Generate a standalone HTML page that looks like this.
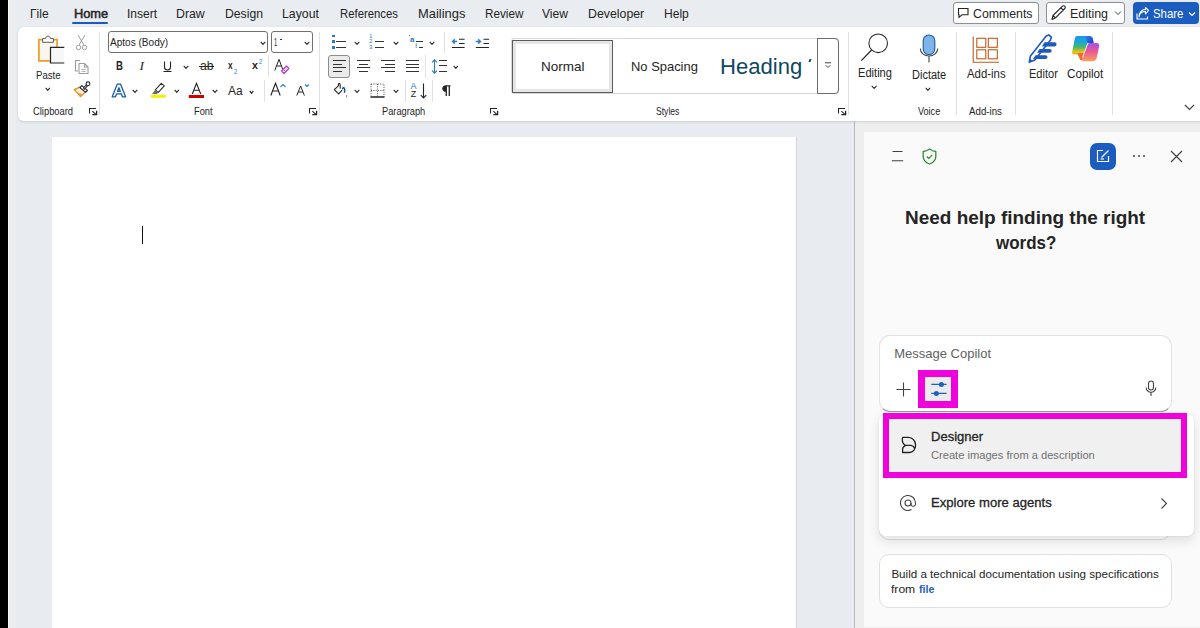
<!DOCTYPE html>
<html><head><meta charset="utf-8">
<style>
*{box-sizing:border-box;margin:0;padding:0}
html,body{width:1200px;height:628px;overflow:hidden}
body{position:relative;background:#e9ecf0;font-family:"Liberation Sans",sans-serif;color:#242424}
.a{position:absolute}
.t{position:absolute;white-space:nowrap;line-height:1}
#strip{left:0;top:0;width:8px;height:628px;background:#000}
#ribbon{left:17.5px;top:26.7px;width:1190px;height:94.3px;background:#fff;border-radius:6px;box-shadow:0 1px 3px rgba(0,0,0,.13)}
#canvas{left:8px;top:121px;width:846px;height:507px;background:#e8ebef}
#col{left:8px;top:0;width:8px;height:628px;background:linear-gradient(90deg,#f7f7f7 0,#f7f7f7 1px,#eceef0 1px)}
#page{left:52px;top:136.5px;width:743.5px;height:491px;background:#fff;box-shadow:1px 0 0 #cfd2d6}
#divider{left:854px;top:121px;width:1px;height:507px;background:#b9b9b9}
#side{left:855px;top:121px;width:345px;height:507px;background:#eeeeee}
#panel{left:864px;top:132px;width:336px;height:495px;background:#fafafa}
.sep{position:absolute;width:1px;background:#e1e1e1}
.tab{font-size:12.4px;color:#242424}
.btn{background:#fff;border:1px solid #8f8f8f;border-radius:3px}
.lbl{font-size:10.5px;color:#424242}
</style></head><body>
<div class="a" id="strip"></div>
<div class="a" id="canvas"></div>
<div class="a" id="col"></div>
<div class="a" id="page"></div>
<div class="a" id="divider"></div>
<div class="a" id="side"></div>
<div class="a" id="panel"></div>
<div class="a" id="ribbon"></div>
<span class="t" style="left:30.00px;top:7.59px;font-size:12.6px;color:#242424;transform:scaleX(0.9524);transform-origin:0 0;">&#915;ile</span>
<span class="t" style="left:127.00px;top:7.59px;font-size:12.6px;color:#242424;transform:scaleX(0.9524);transform-origin:0 0;">Insert</span>
<span class="t" style="left:176.25px;top:7.59px;font-size:12.6px;color:#242424;transform:scaleX(0.9772);transform-origin:0 0;">Draw</span>
<span class="t" style="left:224.50px;top:7.59px;font-size:12.6px;color:#242424;transform:scaleX(0.9682);transform-origin:0 0;">Design</span>
<span class="t" style="left:281.75px;top:7.59px;font-size:12.6px;color:#242424;transform:scaleX(0.9772);transform-origin:0 0;">Layout</span>
<span class="t" style="left:339.50px;top:7.59px;font-size:12.6px;color:#242424;transform:scaleX(0.8999);transform-origin:0 0;">References</span>
<span class="t" style="left:418.00px;top:7.59px;font-size:12.6px;color:#242424;transform:scaleX(1.0272);transform-origin:0 0;">Mailings</span>
<span class="t" style="left:484.50px;top:7.59px;font-size:12.6px;color:#242424;transform:scaleX(0.9316);transform-origin:0 0;">Review</span>
<span class="t" style="left:542.00px;top:7.59px;font-size:12.6px;color:#242424;transform:scaleX(0.9598);transform-origin:0 0;">View</span>
<span class="t" style="left:587.50px;top:7.59px;font-size:12.6px;color:#242424;transform:scaleX(0.9790);transform-origin:0 0;">Developer</span>
<span class="t" style="left:663.60px;top:7.59px;font-size:12.6px;color:#242424;transform:scaleX(0.9578);transform-origin:0 0;">Help</span>
<span class="t" style="left:73.50px;top:7.59px;font-size:12.6px;color:#242424;transform:scaleX(1.0166);transform-origin:0 0;-webkit-text-stroke:0.5px #242424;">Home</span>
<div class="a" style="left:72px;top:22px;width:36px;height:2px;background:#185abd;border-radius:1px"></div>
<div class="a btn" style="left:953px;top:2px;width:86px;height:21.6px"></div>
<div class="a btn" style="left:1046.3px;top:2px;width:78.5px;height:21.6px"></div>
<div class="a" style="left:1133px;top:2px;width:66px;height:22px;background:#1a5cc0;border-radius:4px"></div>
<span class="t" style="left:972.50px;top:7.69px;font-size:12.6px;color:#242424;transform:scaleX(0.9767);transform-origin:0 0;">Comments</span>
<span class="t" style="left:1070.00px;top:7.69px;font-size:12.6px;color:#242424;transform:scaleX(0.9856);transform-origin:0 0;">Editing</span>
<span class="t" style="left:1152.50px;top:8.02px;font-size:12.8px;color:#fff;transform:scaleX(0.8924);transform-origin:0 0;">Share</span>

<svg class="a" style="left:956px;top:6px" width="14" height="14" viewBox="0 0 14 14"><path d="M2.5 2.5h9.5v6.3H6L3 11.3V8.8h-0.5z" fill="none" stroke="#242424" stroke-width="1.1" stroke-linejoin="miter"/></svg>
<svg class="a" style="left:1050px;top:5px" width="17" height="16" viewBox="0 0 17 16"><path d="M2 14.5l1-4L12.5 1.2a1.6 1.6 0 0 1 2.3 2.3L5.5 12.8z M11 2.8l2.3 2.3 M3 10.5l2.5 2.3" fill="none" stroke="#242424" stroke-width="1.1" stroke-linejoin="round"/></svg>
<svg class="a" style="left:1114px;top:10px" width="8" height="6" viewBox="0 0 8 6"><path d="M1 1.5l3 3 3-3" fill="none" stroke="#424242" stroke-width="1"/></svg>
<svg class="a" style="left:1136px;top:7px" width="13" height="13" viewBox="0 0 13 13"><path d="M1 6.5v5.5h10.5V9.5" fill="none" stroke="#fff" stroke-width="1.1"/><path d="M3 10c0.5-3.5 3-5.5 6.5-5.5V7L12.5 3.5 9.5 0.5V2.5C5.5 2.5 3 5.5 3 10z" fill="none" stroke="#fff" stroke-width="1.1" stroke-linejoin="round"/></svg>
<svg class="a" style="left:1188px;top:11px" width="8" height="6" viewBox="0 0 8 6"><path d="M1 1.5l3 3 3-3" fill="none" stroke="#fff" stroke-width="1.1"/></svg>

<div class="a" style="left:99px;top:32px;width:1px;height:83px;background:#e0e0e0"></div>
<div class="a" style="left:319px;top:32px;width:1px;height:83px;background:#e0e0e0"></div>
<div class="a" style="left:848px;top:32px;width:1px;height:83px;background:#e0e0e0"></div>
<div class="a" style="left:956px;top:32px;width:1px;height:83px;background:#e0e0e0"></div>
<div class="a" style="left:1015px;top:32px;width:1px;height:83px;background:#e0e0e0"></div>
<div class="a" style="left:1112px;top:32px;width:1px;height:83px;background:#e0e0e0"></div>
<div class="a" style="left:268px;top:55px;width:1px;height:22px;background:#e0e0e0"></div>
<div class="a" style="left:264px;top:80px;width:1px;height:22px;background:#e0e0e0"></div>
<div class="a" style="left:444px;top:32px;width:1px;height:21px;background:#e0e0e0"></div>
<div class="a" style="left:425px;top:55px;width:1px;height:23px;background:#e0e0e0"></div>
<div class="a" style="left:405px;top:80px;width:1px;height:22px;background:#e0e0e0"></div>
<div class="a" style="left:432px;top:80px;width:1px;height:22px;background:#e0e0e0"></div>
<span class="t" style="left:32.90px;top:105.89px;font-size:10.6px;color:#242424;transform:scaleX(0.8839);transform-origin:0 0;">Clipboard</span>
<span class="t" style="left:193.50px;top:105.89px;font-size:10.6px;color:#242424;transform:scaleX(0.8726);transform-origin:0 0;">Font</span>
<span class="t" style="left:381.70px;top:105.89px;font-size:10.6px;color:#242424;transform:scaleX(0.8747);transform-origin:0 0;">Paragraph</span>
<span class="t" style="left:656.00px;top:105.89px;font-size:10.6px;color:#242424;transform:scaleX(0.8101);transform-origin:0 0;">Styles</span>
<span class="t" style="left:917.50px;top:105.89px;font-size:10.6px;color:#242424;transform:scaleX(0.8566);transform-origin:0 0;">Voice</span>
<span class="t" style="left:969.00px;top:105.89px;font-size:10.6px;color:#242424;transform:scaleX(0.9184);transform-origin:0 0;">Add-ins</span>
<svg class="a" style="left:89px;top:108px" width="9" height="8" viewBox="0 0 9 8"><path d="M0.5 5.5V0.5H7" fill="none" stroke="#242424" stroke-width="1.1"/><path d="M3.3 3.2L7 6.3" stroke="#242424" stroke-width="1.1"/><path d="M3.3 6.6H7.6V2.8" fill="none" stroke="#242424" stroke-width="1.3"/></svg>
<svg class="a" style="left:309px;top:108px" width="9" height="8" viewBox="0 0 9 8"><path d="M0.5 5.5V0.5H7" fill="none" stroke="#242424" stroke-width="1.1"/><path d="M3.3 3.2L7 6.3" stroke="#242424" stroke-width="1.1"/><path d="M3.3 6.6H7.6V2.8" fill="none" stroke="#242424" stroke-width="1.3"/></svg>
<svg class="a" style="left:490px;top:108px" width="9" height="8" viewBox="0 0 9 8"><path d="M0.5 5.5V0.5H7" fill="none" stroke="#242424" stroke-width="1.1"/><path d="M3.3 3.2L7 6.3" stroke="#242424" stroke-width="1.1"/><path d="M3.3 6.6H7.6V2.8" fill="none" stroke="#242424" stroke-width="1.3"/></svg>
<svg class="a" style="left:838px;top:108px" width="9" height="8" viewBox="0 0 9 8"><path d="M0.5 5.5V0.5H7" fill="none" stroke="#242424" stroke-width="1.1"/><path d="M3.3 3.2L7 6.3" stroke="#242424" stroke-width="1.1"/><path d="M3.3 6.6H7.6V2.8" fill="none" stroke="#242424" stroke-width="1.3"/></svg>
<svg class="a" style="left:1184px;top:104px" width="11" height="7" viewBox="0 0 11 7"><path d="M1 1l4.5 4.5L10 1" fill="none" stroke="#424242" stroke-width="1.1"/></svg>
<svg class="a" style="left:36px;top:34px" width="30" height="31" viewBox="0 0 30 31"><rect x="2.9" y="5.6" width="18.2" height="21.3" fill="#fbf6ee" stroke="#eba43a" stroke-width="1.9"/><path d="M6.6 8.3V4.6H9.6C9.8 2.7 10.8 2.2 12 2.2S14.2 2.7 14.4 4.6H17.4V8.3z" fill="#fff" stroke="#5a5a5a" stroke-width="1"/><path d="M28.3 13.4H14.5V29H28.3" fill="#f7f7f7" stroke="#242424" stroke-width="1.2"/></svg>
<span class="t" style="left:35.80px;top:69.82px;font-size:10.8px;color:#242424;transform:scaleX(0.8879);transform-origin:0 0;">Paste</span>
<svg class="a" style="left:45.00px;top:87.00px" width="5.5" height="4.5" viewBox="0 0 5.5 4.5"><path d="M0.7 0.9L2.75 3.4L4.80 0.9" fill="none" stroke="#242424" stroke-width="1.05"/></svg>
<svg class="a" style="left:75px;top:34px" width="13" height="17" viewBox="0 0 13 17"><path d="M3 1L9 11 M10 1L4 11" stroke="#9e9e9e" stroke-width="1" fill="none"/><circle cx="3.5" cy="13.5" r="2.2" fill="none" stroke="#9e9e9e"/><circle cx="9.5" cy="13.5" r="2.2" fill="none" stroke="#9e9e9e"/></svg>
<svg class="a" style="left:73px;top:58px" width="17" height="17" viewBox="0 0 17 17"><path d="M7 2.5H2.5V13H5" fill="none" stroke="#9e9e9e" stroke-width="1.1"/><path d="M6 5.5H11.5L15 9V15.5H6z M11.5 5.5V9H15" fill="#fff" stroke="#9e9e9e" stroke-width="1.1" stroke-linejoin="round"/><path d="M8.5 11.5h4M8.5 13.5h4" stroke="#9e9e9e" stroke-width="0.8"/></svg>
<svg class="a" style="left:70px;top:78px" width="24" height="22" viewBox="0 0 24 22"><path d="M4.3 11.6L9.8 9.1 15.4 14 10.5 18.6z" fill="#fdf0dc" stroke="#e08a1e" stroke-width="1.3" stroke-linejoin="round"/><path d="M6.5 14.2L10.5 18.6 13 16.3z" fill="#e8a040"/><path d="M10 9.6L11.8 7.6 17.5 12.4 15.6 14.4z" fill="#fff" stroke="#2a2a2a" stroke-width="1.2" stroke-linejoin="round"/><path d="M14.2 10.3L17 7.2" stroke="#2a2a2a" stroke-width="2.6" stroke-linecap="round"/><path d="M14.2 10.3L17 7.2" stroke="#fff" stroke-width="0.7" stroke-linecap="round"/><circle cx="18" cy="5.8" r="1.9" fill="#fff" stroke="#2a2a2a" stroke-width="1.1"/></svg>
<div class="a" style="left:108px;top:31px;width:160px;height:22px;border:1px solid #707070;border-radius:3px;background:#fff"></div>
<div class="a" style="left:271px;top:31px;width:41.5px;height:21.8px;border:1px solid #707070;border-radius:3px;background:#fff"></div>
<span class="t" style="left:110.10px;top:37.18px;font-size:11.2px;color:#242424;transform:scaleX(0.8990);transform-origin:0 0;">Aptos (Body)</span>
<span class="t" style="left:274.00px;top:37.08px;font-size:11.2px;color:#242424;transform:scaleX(0.5148);transform-origin:0 0;">1</span>
<div class="a" style="left:280px;top:38.8px;width:1.8px;height:1px;background:#333"></div>
<svg class="a" style="left:259.50px;top:40.50px" width="6.0" height="4.5" viewBox="0 0 6.0 4.5"><path d="M0.7 0.9L3.00 3.4L5.30 0.9" fill="none" stroke="#242424" stroke-width="1.05"/></svg>
<svg class="a" style="left:303.50px;top:40.50px" width="6.0" height="4.5" viewBox="0 0 6.0 4.5"><path d="M0.7 0.9L3.00 3.4L5.30 0.9" fill="none" stroke="#242424" stroke-width="1.05"/></svg>
<span class="t" style="left:115.50px;top:60.29px;font-size:12.6px;font-weight:bold;color:#242424;transform:scaleX(0.7606);transform-origin:0 0;">B</span>
<span class="t" style="left:139.5px;top:58.5px;font:italic 13.5px/1 'Liberation Serif';color:#242424;">I</span>
<svg class="a" style="left:163px;top:61px" width="9" height="12" viewBox="0 0 9 12"><path d="M1.5 0.5V6a3 3 0 0 0 6 0V0.5" fill="none" stroke="#242424" stroke-width="1.1"/><path d="M0.5 10.5H8.5" stroke="#242424" stroke-width="1"/></svg>
<svg class="a" style="left:182.50px;top:64.50px" width="6.0" height="4.5" viewBox="0 0 6.0 4.5"><path d="M0.7 0.9L3.00 3.4L5.30 0.9" fill="none" stroke="#242424" stroke-width="1.05"/></svg>
<span class="t" style="left:199.50px;top:60.30px;font-size:12px;color:#242424;transform:scaleX(1.0135);transform-origin:0 0;">ab</span>
<div class="a" style="left:198.5px;top:66px;width:15.5px;height:1px;background:#242424"></div>
<span class="t" style="left:227.80px;top:60.23px;font-size:11.5px;font-weight:bold;color:#242424;transform:scaleX(0.7207);transform-origin:0 0;">x</span>
<span class="t" style="left:233.80px;top:68.05px;font-size:7px;color:#2a7ac4;transform:scaleX(0.8237);transform-origin:0 0;">2</span>
<span class="t" style="left:251.70px;top:60.23px;font-size:11.5px;font-weight:bold;color:#242424;transform:scaleX(0.9244);transform-origin:0 0;">x</span>
<span class="t" style="left:258.50px;top:58.05px;font-size:7px;color:#2a7ac4;transform:scaleX(0.8237);transform-origin:0 0;">2</span>
<svg class="a" style="left:274px;top:58px" width="17" height="17" viewBox="0 0 17 17"><path d="M0.8 12.5L5 1.3L9.2 12.5 M2.5 8h5" fill="none" stroke="#242424" stroke-width="1"/><path d="M7.5 13l5-5 2.5 2.5-5 5z" fill="#f2d8f5" stroke="#b146c2" stroke-width="1.2" stroke-linejoin="round"/><path d="M9.2 11.3l2.5 2.5" stroke="#b146c2"/></svg>
<svg class="a" style="left:110.8px;top:82.6px" width="16" height="15" viewBox="0 0 16 15"><path d="M1.2 13.8L6.3 1h3.2L14.6 13.8h-3.2l-1.1-3H5.6l-1.1 3z M6.5 8.4h2.8L7.9 4.6z" fill="#effaff" stroke="#1d5a9c" stroke-width="1.25" stroke-linejoin="round"/></svg>
<svg class="a" style="left:132.00px;top:89.00px" width="6.0" height="4.5" viewBox="0 0 6.0 4.5"><path d="M0.7 0.9L3.00 3.4L5.30 0.9" fill="none" stroke="#242424" stroke-width="1.05"/></svg>
<svg class="a" style="left:148px;top:80px" width="20" height="20" viewBox="0 0 20 20"><path d="M7.3 9.8L13.3 3.3 16.3 5.9 10.3 12.4z" fill="#fff" stroke="#2e2e2e" stroke-width="1.1" stroke-linejoin="round"/><path d="M7.3 9.8L10.3 12.4 8.9 13.9H4z" fill="#6b6b6b"/><rect x="3" y="14.8" width="14.8" height="3" fill="#f3f000"/></svg>
<svg class="a" style="left:173.50px;top:89.00px" width="5.5" height="4.5" viewBox="0 0 5.5 4.5"><path d="M0.7 0.9L2.75 3.4L4.80 0.9" fill="none" stroke="#242424" stroke-width="1.05"/></svg>
<svg class="a" style="left:188px;top:82px" width="17" height="17" viewBox="0 0 17 17"><path d="M4.3 12L8.5 1.3L12.7 12 M5.8 8.2h5.4" fill="none" stroke="#242424" stroke-width="1.1"/><rect x="0.8" y="13" width="15.2" height="3" fill="#d10000"/></svg>
<svg class="a" style="left:211.50px;top:89.00px" width="6.0" height="4.5" viewBox="0 0 6.0 4.5"><path d="M0.7 0.9L3.00 3.4L5.30 0.9" fill="none" stroke="#242424" stroke-width="1.05"/></svg>
<span class="t" style="left:228.30px;top:84.88px;font-size:12.5px;color:#242424;transform:scaleX(0.9600);transform-origin:0 0;">Aa</span>
<svg class="a" style="left:248.50px;top:89.50px" width="5.0" height="4.5" viewBox="0 0 5.0 4.5"><path d="M0.7 0.9L2.50 3.4L4.30 0.9" fill="none" stroke="#242424" stroke-width="1.05"/></svg>
<svg class="a" style="left:270px;top:82px" width="17" height="15" viewBox="0 0 17 15"><path d="M0.8 13.5L5.5 1.2L10.2 13.5 M2.7 9h5.6" fill="none" stroke="#242424" stroke-width="1.1"/><path d="M10.5 5l2.5-2.5 2.5 2.5" fill="none" stroke="#2a7ac4" stroke-width="1.1"/></svg>
<svg class="a" style="left:296px;top:83px" width="14" height="14" viewBox="0 0 14 14"><path d="M0.8 12.5L4.6 3L8.4 12.5 M2.3 9h4.6" fill="none" stroke="#242424" stroke-width="1"/><path d="M9 1.5l2 2 2-2" fill="none" stroke="#2a7ac4" stroke-width="1.1"/></svg>
<div class="a" style="left:332px;top:35px;width:2.6px;height:2.3px;background:#2b78c5"></div>
<div class="a" style="left:332px;top:40.3px;width:2.6px;height:2.3px;background:#2b78c5"></div>
<div class="a" style="left:332px;top:46.3px;width:2.6px;height:2.3px;background:#2b78c5"></div>
<div class="a" style="left:336px;top:41px;width:10px;height:1px;background:#333"></div>
<div class="a" style="left:336px;top:47px;width:10px;height:1px;background:#333"></div>
<svg class="a" style="left:354.00px;top:40.50px" width="6.0" height="4.5" viewBox="0 0 6.0 4.5"><path d="M0.7 0.9L3.00 3.4L5.30 0.9" fill="none" stroke="#242424" stroke-width="1.05"/></svg>
<span class="t" style="left:369.3px;top:33.5px;font-size:5.6px;color:#2b78c5;line-height:1">1</span>
<span class="t" style="left:369.3px;top:39px;font-size:5.6px;color:#2b78c5;line-height:1">2</span>
<span class="t" style="left:369.3px;top:45px;font-size:5.6px;color:#2b78c5;line-height:1">3</span>
<div class="a" style="left:375px;top:41px;width:9px;height:1px;background:#333"></div>
<div class="a" style="left:375px;top:47px;width:9px;height:1px;background:#333"></div>
<svg class="a" style="left:392.50px;top:40.50px" width="6.0" height="4.5" viewBox="0 0 6.0 4.5"><path d="M0.7 0.9L3.00 3.4L5.30 0.9" fill="none" stroke="#242424" stroke-width="1.05"/></svg>
<div class="a" style="left:409px;top:34.5px;width:1.2px;height:1.2px;background:#2b78c5"></div>
<span class="t" style="left:410.1px;top:35.6px;font-size:8px;font-weight:bold;color:#2b78c5;line-height:1">a</span>
<span class="t" style="left:415.3px;top:42.2px;font-size:8px;color:#2b78c5;line-height:1">i</span>
<div class="a" style="left:416px;top:41px;width:7px;height:1px;background:#333"></div>
<div class="a" style="left:419px;top:47px;width:4px;height:1px;background:#333"></div>
<svg class="a" style="left:429.00px;top:40.50px" width="6.0" height="4.5" viewBox="0 0 6.0 4.5"><path d="M0.7 0.9L3.00 3.4L5.30 0.9" fill="none" stroke="#242424" stroke-width="1.05"/></svg>
<svg class="a" style="left:451px;top:38px" width="15" height="11" viewBox="0 0 15 11"><path d="M6.2 3.5H1.6M3.8 1.3L1.5 3.5 3.8 5.7" fill="none" stroke="#2a7ab8" stroke-width="1.3"/><path d="M8 1.3h5.6M8 5.5h5.6M0.8 9.5h12.8" stroke="#242424" stroke-width="1.1"/></svg>
<svg class="a" style="left:475px;top:38px" width="15" height="11" viewBox="0 0 15 11"><path d="M0.8 3.5H5.4M3.2 1.3L5.5 3.5 3.2 5.7" fill="none" stroke="#2a7ab8" stroke-width="1.3"/><path d="M8.5 1.3h5.6M8.5 5.5h5.6M0.8 9.5h13.3" stroke="#242424" stroke-width="1.1"/></svg>
<div class="a" style="left:328px;top:55px;width:22px;height:22.5px;background:#ebebeb;border:1px solid #8c8c8c;border-radius:3px"></div>
<div class="a" style="left:333px;top:60px;width:13px;height:1px;background:#333"></div>
<div class="a" style="left:357px;top:60px;width:13px;height:1px;background:#333"></div>
<div class="a" style="left:381px;top:60px;width:14px;height:1px;background:#333"></div>
<div class="a" style="left:406px;top:60px;width:13px;height:1px;background:#333"></div>
<div class="a" style="left:333px;top:64px;width:9px;height:1px;background:#333"></div>
<div class="a" style="left:359px;top:64px;width:9px;height:1px;background:#333"></div>
<div class="a" style="left:385px;top:64px;width:10px;height:1px;background:#333"></div>
<div class="a" style="left:406px;top:64px;width:13px;height:1px;background:#333"></div>
<div class="a" style="left:333px;top:67px;width:13px;height:1px;background:#333"></div>
<div class="a" style="left:357px;top:67px;width:13px;height:1px;background:#333"></div>
<div class="a" style="left:381px;top:67px;width:14px;height:1px;background:#333"></div>
<div class="a" style="left:406px;top:67px;width:13px;height:1px;background:#333"></div>
<div class="a" style="left:333px;top:71px;width:9px;height:1px;background:#333"></div>
<div class="a" style="left:359px;top:71px;width:9px;height:1px;background:#333"></div>
<div class="a" style="left:385px;top:71px;width:10px;height:1px;background:#333"></div>
<div class="a" style="left:406px;top:71px;width:13px;height:1px;background:#333"></div>
<svg class="a" style="left:431px;top:59px" width="7" height="15" viewBox="0 0 7 15"><path d="M3.5 1v13M1 3.3L3.5 0.8 6 3.3M1 11.7L3.5 14.2 6 11.7" fill="none" stroke="#2b78c5" stroke-width="1.1"/></svg>
<div class="a" style="left:439px;top:60px;width:8px;height:1px;background:#333"></div>
<div class="a" style="left:439px;top:65px;width:8px;height:1px;background:#333"></div>
<div class="a" style="left:439px;top:71px;width:8px;height:1px;background:#333"></div>
<svg class="a" style="left:452.80px;top:64.50px" width="5.7" height="4.5" viewBox="0 0 5.7 4.5"><path d="M0.7 0.9L2.85 3.4L5.00 0.9" fill="none" stroke="#242424" stroke-width="1.05"/></svg>
<svg class="a" style="left:330px;top:80px" width="20" height="20" viewBox="0 0 20 20"><path d="M10.3 8.6L10.1 4.3C9.9 3.2 8.4 3.3 8.4 4.3V5.8L4.3 9.6 8.6 13.8 12.1 10.1" fill="none" stroke="#242424" stroke-width="1.1" stroke-linejoin="round"/><path d="M12.4 9.3C12.5 7.3 14.5 7.3 14.6 9.2V12.8" fill="none" stroke="#0e5c86" stroke-width="1.5"/><path d="M16.6 15V17.6" stroke="#888" stroke-width="0.9"/></svg>
<svg class="a" style="left:354.00px;top:89.00px" width="6.0" height="4.5" viewBox="0 0 6.0 4.5"><path d="M0.7 0.9L3.00 3.4L5.30 0.9" fill="none" stroke="#242424" stroke-width="1.05"/></svg>
<svg class="a" style="left:369.5px;top:82.5px" width="15" height="15" viewBox="0 0 15 15"><path d="M1 1H14V14M1 1V14M7.5 1V14M1 7.5H14" fill="none" stroke="#555" stroke-width="1" stroke-dasharray="1 1.3"/><path d="M0.5 14H14.5" stroke="#242424" stroke-width="1.5"/></svg>
<svg class="a" style="left:392.50px;top:89.00px" width="6.0" height="4.5" viewBox="0 0 6.0 4.5"><path d="M0.7 0.9L3.00 3.4L5.30 0.9" fill="none" stroke="#242424" stroke-width="1.05"/></svg>
<span class="t" style="left:410.6px;top:81.8px;font-size:9px;color:#2b78c5;line-height:1">A</span>
<span class="t" style="left:410.8px;top:90.2px;font-size:9px;color:#242424;line-height:1">Z</span>
<svg class="a" style="left:419.5px;top:82.5px" width="7" height="16" viewBox="0 0 7 16"><path d="M3.5 0.5V15M0.8 12.2L3.5 15 6.2 12.2" fill="none" stroke="#242424" stroke-width="1.1"/></svg>
<svg class="a" style="left:441px;top:85px" width="10" height="11" viewBox="0 0 10 11"><path d="M4.5 0.8A2.8 2.8 0 0 0 4.5 6.4z" fill="#242424" stroke="#242424"/><path d="M4.5 0.8H9.5M5.3 0.8V11M8.3 0.8V11" fill="none" stroke="#242424" stroke-width="1.3"/></svg>
<div class="a" style="left:510.5px;top:38.4px;width:328px;height:56px;border:1px solid #d6d6d6;border-radius:3px;background:#fff"></div>
<div class="a" style="left:512px;top:40px;width:101px;height:52.5px;border:1.5px solid #5c5c5c;background:#fff;box-shadow:inset 0 0 0 3px #e6e6e6"></div>
<div class="a" style="left:817.3px;top:38.4px;width:21.5px;height:56px;border:1px solid #6b6b6b;border-radius:0 4px 4px 0;background:#fff"></div>
<svg class="a" style="left:824px;top:62px" width="8" height="7" viewBox="0 0 8 7"><path d="M1 0.8h6M1.8 3.3L4 5.5 6.2 3.3" fill="none" stroke="#424242" stroke-width="1"/></svg>
<span class="t" style="left:540.50px;top:61.12px;font-size:12.8px;color:#242424;transform:scaleX(1.0538);transform-origin:0 0;">Normal</span>
<span class="t" style="left:630.50px;top:61.12px;font-size:12.8px;color:#242424;transform:scaleX(1.0109);transform-origin:0 0;">No Spacing</span>
<span class="t" style="left:719.80px;top:55.58px;font-size:22.5px;color:#0f4761;transform:scaleX(0.9808);transform-origin:0 0;">Heading</span>
<div class="a" style="left:809px;top:59px;width:1.5px;height:3px;background:#0f4761;transform:skewX(-20deg)"></div>
<svg class="a" style="left:860px;top:33px" width="30" height="29" viewBox="0 0 30 29"><circle cx="18.2" cy="10.3" r="9.3" fill="#fff" stroke="#242424" stroke-width="1.05"/><path d="M11.6 17L1.3 27.7" stroke="#242424" stroke-width="1.2"/></svg>
<span class="t" style="left:857.60px;top:66.70px;font-size:12px;color:#242424;transform:scaleX(0.9259);transform-origin:0 0;">Editing</span>
<svg class="a" style="left:871.20px;top:84.50px" width="6.3" height="4.5" viewBox="0 0 6.3 4.5"><path d="M0.7 0.9L3.15 3.4L5.60 0.9" fill="none" stroke="#242424" stroke-width="1.05"/></svg>
<svg class="a" style="left:918px;top:34px" width="22" height="29" viewBox="0 0 22 29"><rect x="5.2" y="1" width="11.6" height="19.5" rx="5.8" fill="#7fb4ea" stroke="#1f5a9e" stroke-width="1.1"/><path d="M2.3 14.5a8.7 7.5 0 0 0 17.4 0M11 22v6.5" fill="none" stroke="#424242" stroke-width="1.1"/></svg>
<span class="t" style="left:911.80px;top:68.80px;font-size:12px;color:#242424;transform:scaleX(0.9164);transform-origin:0 0;">Dictate</span>
<svg class="a" style="left:925.30px;top:86.50px" width="5.8" height="4.5" viewBox="0 0 5.8 4.5"><path d="M0.7 0.9L2.90 3.4L5.10 0.9" fill="none" stroke="#242424" stroke-width="1.05"/></svg>
<svg class="a" style="left:972px;top:36px" width="28" height="27" viewBox="0 0 28 27"><path d="M1.2 0.5V26.2H27" fill="none" stroke="#c05a1a" stroke-width="1.1"/><rect x="4.8" y="2.3" width="9" height="9" fill="none" stroke="#c05a1a" stroke-width="1.1"/><rect x="16.3" y="2.3" width="9" height="9" fill="none" stroke="#c05a1a" stroke-width="1.1"/><rect x="4.8" y="13.8" width="9" height="9" fill="none" stroke="#c05a1a" stroke-width="1.1"/><rect x="16.3" y="13.8" width="9" height="9" fill="none" stroke="#c05a1a" stroke-width="1.1"/></svg>
<span class="t" style="left:967.00px;top:67.60px;font-size:12px;color:#242424;transform:scaleX(0.9489);transform-origin:0 0;">Add-ins</span>
<svg class="a" style="left:1027px;top:34px" width="31" height="30" viewBox="0 0 31 30"><path d="M2.2 28.3L3.3 22.3 19 2.3 21.8 0.9 24.3 3.2 23.5 6 7.8 26z" fill="#fff" stroke="#1e5bbf" stroke-width="1.6" stroke-linejoin="round"/><path d="M2.2 28.3L2.9 24.6 5.5 26.7z" fill="#1e5bbf"/><path d="M17.4 8.2H27.5a2.1 2.1 0 0 1 0 4.2H15z M12.5 14.9H22.8a1.9 1.9 0 0 1 0 3.8H10z M8.6 21.2H18.6a1.9 1.9 0 0 1 0 3.8H6z" fill="#1e5bbf"/></svg>
<span class="t" style="left:1028.80px;top:67.60px;font-size:12px;color:#242424;transform:scaleX(0.9195);transform-origin:0 0;">Editor</span>
<svg class="a" style="left:1068px;top:32px" width="34" height="32" viewBox="0 0 34 32"><defs><linearGradient id="cg1" x1="0" y1="0" x2="0" y2="1"><stop offset="0" stop-color="#1a9ae6"/><stop offset=".3" stop-color="#1fa2e0"/><stop offset=".6" stop-color="#43b86a"/><stop offset=".85" stop-color="#e7c418"/><stop offset="1" stop-color="#f2b418"/></linearGradient><linearGradient id="cg2" x1="0" y1="0" x2="0" y2="1"><stop offset="0" stop-color="#a94ef0"/><stop offset=".5" stop-color="#ee5a8c"/><stop offset="1" stop-color="#f8a05e"/></linearGradient><linearGradient id="cg3" x1="0" y1="0" x2="1" y2="1"><stop offset="0" stop-color="#2f7ef0"/><stop offset="1" stop-color="#1a3fc6"/></linearGradient></defs><path d="M9 4H21C23 4 24.4 5 24.9 7L25.6 11H20.8L16.2 22.5H6C4.6 22.5 3.8 21.5 4.1 20L6.6 7.5C7.1 5.3 7.8 4 9 4z" fill="url(#cg1)"/><path d="M17.5 4H21C23 4 24.4 5 24.9 7L25.6 11.5H19.8z" fill="url(#cg3)"/><path d="M9.5 21H17.5L14.8 27.8C14.3 28.8 12.8 28.8 12.2 27.8L10 23z" fill="#f26a2e"/><path d="M20.8 11.2L15.3 26" stroke="#fff" stroke-width="2.6"/><path d="M22 11H28.6C30.6 11 31.6 12.5 31.1 14.5L28.6 26.2C28.1 28.2 26.6 29.2 24.6 29.2H15.8C14.6 29.2 14 28.2 14.4 27.2L19.4 13.5C20 11.8 20.8 11 22 11z" fill="url(#cg2)"/></svg>
<span class="t" style="left:1066.70px;top:67.60px;font-size:12px;color:#242424;transform:scaleX(0.9711);transform-origin:0 0;">Copilot</span>
<div class="a" style="left:142px;top:226px;width:1px;height:18px;background:#111"></div>
<svg class="a" style="left:891px;top:150px" width="13" height="12" viewBox="0 0 13 12"><path d="M1.5 1.5H11.5M0.8 10.8H12.2" stroke="#424242" stroke-width="1.1"/></svg>
<svg class="a" style="left:922px;top:148px" width="15" height="17" viewBox="0 0 15 17"><path d="M7.5 1C5.5 2.5 3.5 3.3 1.2 3.5V8.5C1.2 12 3.5 14.5 7.5 16 11.5 14.5 13.8 12 13.8 8.5V3.5C11.5 3.3 9.5 2.5 7.5 1z" fill="none" stroke="#2e8a36" stroke-width="1.3" stroke-linejoin="round"/><path d="M4.8 8.5L6.8 10.5 10.3 6.8" fill="none" stroke="#2e8a36" stroke-width="1.2"/></svg>
<div class="a" style="left:1090px;top:143px;width:26px;height:27px;background:#1a5cc0;border-radius:7px"></div>
<svg class="a" style="left:1095px;top:148px" width="16" height="16" viewBox="0 0 16 16"><path d="M8 2.5H2.5V13.5H13.5V8" fill="none" stroke="#fff" stroke-width="1.2"/><path d="M6.5 9.5L13.5 2.5" stroke="#fff" stroke-width="1.3"/><path d="M5.5 11H9" stroke="#fff" stroke-width="1.1"/></svg>
<div class="a" style="left:1133px;top:155px;width:2px;height:2px;background:#424242;border-radius:1px"></div>
<div class="a" style="left:1138px;top:155px;width:2px;height:2px;background:#424242;border-radius:1px"></div>
<div class="a" style="left:1143px;top:155px;width:2px;height:2px;background:#424242;border-radius:1px"></div>
<svg class="a" style="left:1170px;top:150px" width="13" height="13" viewBox="0 0 13 13"><path d="M1 1L12 12M12 1L1 12" stroke="#424242" stroke-width="1.2"/></svg>
<span class="t" style="left:905.20px;top:207.88px;font-size:19.2px;font-weight:bold;color:#242424;transform:scaleX(0.9882);transform-origin:0 0;">Need help finding the right</span>
<span class="t" style="left:995.58px;top:233.48px;font-size:19.2px;font-weight:bold;color:#242424;transform:scaleX(0.8851);transform-origin:0 0;">words?</span>
<div class="a" style="left:878.5px;top:334.5px;width:293.5px;height:77.5px;background:#fff;border:1px solid #e3e3e3;border-bottom-color:#9a9a9a;border-radius:11px;"></div>
<span class="t" style="left:894.20px;top:346.95px;font-size:13px;color:#616161;">Message Copilot</span>
<svg class="a" style="left:896px;top:382px" width="15" height="15" viewBox="0 0 15 15"><path d="M7.5 0.5V14.5M0.5 7.5H14.5" stroke="#424242" stroke-width="1.1"/></svg>
<div class="a" style="left:918px;top:370px;width:40px;height:37.6px;background:#ef02dc"></div>
<div class="a" style="left:925px;top:377px;width:26px;height:24px;background:#ebebeb"></div>
<svg class="a" style="left:930px;top:380px" width="18" height="16" viewBox="0 0 18 16"><path d="M1.3 4.4H16.6M1.3 13.4H16.6" stroke="#1f5fbf" stroke-width="1.2"/><circle cx="11.4" cy="4.4" r="2.5" fill="#1f5fbf"/><circle cx="6.4" cy="13.4" r="2.5" fill="#1f5fbf"/></svg>
<svg class="a" style="left:1145px;top:380px" width="12" height="17" viewBox="0 0 12 17"><rect x="3.5" y="1" width="5" height="9" rx="2.5" fill="none" stroke="#424242" stroke-width="1.1"/><path d="M1.2 7.5a4.8 4.8 0 0 0 9.6 0M6 12.5V16" fill="none" stroke="#424242" stroke-width="1.1"/></svg>
<div class="a" style="left:879px;top:480px;width:292px;height:60px;background:#fff;border:1px solid #dcdcdc;border-radius:10px"></div>
<div class="a" style="left:879px;top:414px;width:315px;height:122px;background:#fff;border-radius:7px;box-shadow:0 5px 12px rgba(0,0,0,.11),0 0 2px rgba(0,0,0,.1)"></div>
<div class="a" style="left:883px;top:413.3px;width:304px;height:64.4px;background:#f0f0f0;border:6.8px solid #ef02dc"></div>
<svg class="a" style="left:896px;top:430px" width="26" height="28" viewBox="0 0 26 28"><path d="M6.6 7.4H12.5C16.5 7.6 19.6 11 19.6 15 19.6 19.5 17 22.5 13.5 22.5H6.6V19C6.6 17.5 8 16.2 9.6 15.4 7.6 14.5 6.3 12 6.3 9.5 6.3 8.3 6.4 7.4 6.6 7.4z M9.6 15.4H15C16.5 15.6 17.8 16.6 18.8 18.6" fill="none" stroke="#242424" stroke-width="1.3" stroke-linejoin="round"/></svg>
<span class="t" style="left:931.20px;top:431.12px;font-size:12.8px;color:#242424;transform:scaleX(1.0176);transform-origin:0 0;-webkit-text-stroke:0.3px #242424;">Designer</span>
<span class="t" style="left:931.20px;top:449.65px;font-size:11px;color:#707070;transform:scaleX(1.0109);transform-origin:0 0;">Create images from a description</span>
<svg class="a" style="left:899px;top:494px" width="18" height="18" viewBox="0 0 18 18"><circle cx="9" cy="9" r="3" fill="none" stroke="#424242" stroke-width="1.1"/><path d="M12 9V10.5A2.3 2.3 0 0 0 16.5 10.5V9A7.5 7.5 0 1 0 12.5 15.6" fill="none" stroke="#424242" stroke-width="1.1"/></svg>
<span class="t" style="left:931.20px;top:496.34px;font-size:13.6px;color:#242424;transform:scaleX(0.9629);transform-origin:0 0;-webkit-text-stroke:0.3px #242424;">Explore more agents</span>
<svg class="a" style="left:1160px;top:497px" width="8" height="13" viewBox="0 0 8 13"><path d="M1.5 1.5L6.5 6.5 1.5 11.5" fill="none" stroke="#424242" stroke-width="1.1"/></svg>
<div class="a" style="left:879px;top:554px;width:292.5px;height:53.5px;background:#fff;border:1px solid #e0e0e0;border-radius:10px"></div>
<span class="t" style="left:891.40px;top:568.44px;font-size:11.6px;color:#242424;">Build a technical documentation using specifications</span>
<span class="t" style="left:891.40px;top:583.14px;font-size:11.6px;color:#242424;transform:scaleX(1.0431);transform-origin:0 0;">from</span>
<span class="t" style="left:919.00px;top:583.14px;font-size:11.6px;font-weight:bold;color:#1f5fbf;transform:scaleX(0.9247);transform-origin:0 0;">file</span>
</body></html>
